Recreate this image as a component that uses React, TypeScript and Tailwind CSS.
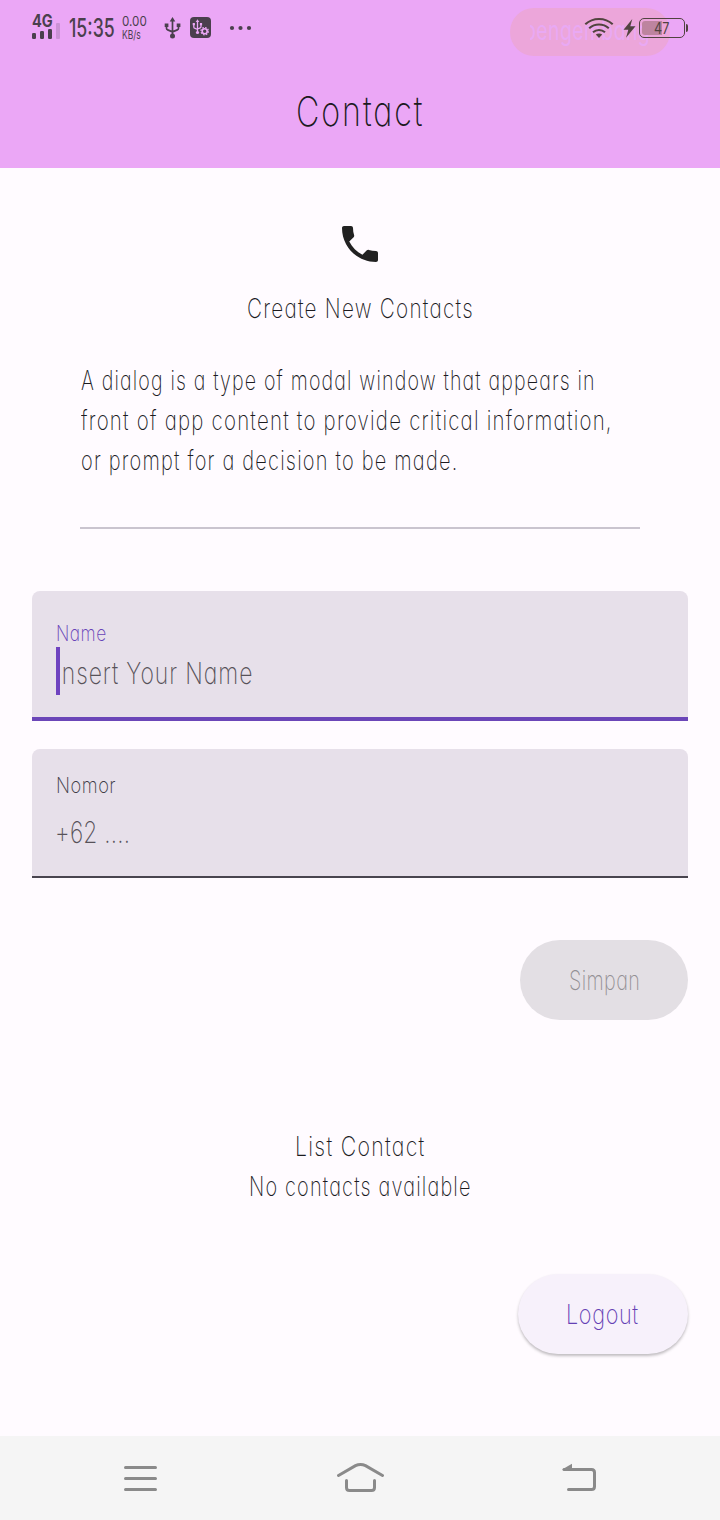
import { useLayoutEffect, useRef, useState } from "react";
import type { ReactNode } from "react";

/** One line of text set in a narrow face: squeezed horizontally to a given width. */
function Narrow({ width, className = "", children }: { width: number; className?: string; children: ReactNode }) {
  const ref = useRef<HTMLSpanElement>(null);
  const [scale, setScale] = useState(0.8);
  useLayoutEffect(() => {
    if (ref.current) setScale(width / ref.current.offsetWidth);
  }, [width]);
  return (
    <span className={`block whitespace-pre ${className}`} style={{ width }}>
      <span ref={ref} className="inline-block origin-left" style={{ transform: `scaleX(${scale})` }}>
        {children}
      </span>
    </span>
  );
}

function StatusBar() {
  return (
    <div className="relative flex h-14 items-start text-[#4a3f4d]">
      <div className="absolute left-[510px] top-2 h-12 w-40 overflow-hidden rounded-full bg-[#eca6da] pl-5">
        <div className="w-[126px] overflow-hidden">
          <Narrow width={126} className="-ml-[6px] text-[27px] font-normal leading-[46px] tracking-[0.02em] text-[#e9a9f4]">
            pengembang
          </Narrow>
        </div>
      </div>
      <div className="ml-8 mt-[14px] w-[29px]">
        <Narrow width={20.5} className="text-[17px] font-bold leading-[14px]">4G</Narrow>
        <svg className="block" width="29" height="11" viewBox="0 0 29 11" fill="currentColor">
          <rect x="0" y="5" width="4" height="6" rx="1.2" />
          <rect x="8" y="3" width="4" height="8" rx="1.2" />
          <rect x="16" y="1" width="4" height="10" rx="1.2" />
        </svg>
      </div>
      <div className="-ml-[5px] mt-[23px] h-4 w-1 rounded-[1px] bg-[#cb92d6]" />
      <Narrow width={46} className="ml-[9px] mt-[13px] text-[25px] font-medium leading-[30px]">15:35</Narrow>
      <div className="ml-[7px] mt-[15px]">
        <Narrow width={25} className="text-[13.5px] leading-[13px]">0.00</Narrow>
        <Narrow width={19} className="text-[12px] leading-[14px]">KB/s</Narrow>
      </div>
      <svg className="ml-[17px] mt-[17px]" width="18" height="22" viewBox="0 0 18 22" fill="none" stroke="currentColor" strokeWidth="1.7">
        <path d="M8.5 3v15M2.500 8v3.200q0 1.300 1.200 1.700l4.800 2M14.500 8v3.200q0 1.300-1.200 1.700l-4.800 2" />
        <path d="M8.500 0 5.700 4.500h5.600zM.700 6.500h3.700v3.500H.700zM12.700 6.500h3.700v3.500h-3.700z" fill="currentColor" stroke="none" />
        <circle cx="8.500" cy="19" r="2.500" fill="currentColor" stroke="none" />
      </svg>
      <svg className="ml-2 mt-[17px]" width="21" height="21" viewBox="0 0 21 21">
        <rect width="21" height="21" rx="4" fill="currentColor" />
        <g fill="none" stroke="#eba7f6" strokeWidth="1.300">
          <path d="M7.500 4v11M3.800 7v3q0 1 .8 1.200l2.900 1.300M11 7v2.500q0 1-.8 1.300l-2.700 1.200" />
          <circle cx="14.700" cy="14.200" r="2.500" strokeWidth="1.600" />
          <circle cx="14.700" cy="14.200" r="3.700" strokeWidth="1.200" strokeDasharray="1.600 1.300" />
        </g>
        <path d="M7.500 2.200 5.700 5h3.600zM2.700 6h2.200v2.300H2.700zM9.900 6h2.200v2.300H9.900z" fill="#eba7f6" />
        <circle cx="7.500" cy="15.500" r="1.600" fill="#eba7f6" />
      </svg>
      <svg className="ml-[18px] mt-[25px]" width="24" height="6" viewBox="0 0 24 6" fill="currentColor">
        <circle cx="3" cy="3" r="2.100" />
        <circle cx="11.500" cy="3" r="2.100" />
        <circle cx="20" cy="3" r="2.100" />
      </svg>
      <div className="relative ml-auto mr-8 mt-[17px] flex items-start text-[#51433f]">
        <svg className="-ml-px" width="30" height="22" viewBox="0 0 30 22" fill="none" stroke="currentColor" strokeWidth="2.100">
          <path d="M1.300 7.300C9 .200 21 .200 28.700 7.300" />
          <path d="M5.200 11.300c5.600-5 14-5 19.600 0" />
          <path d="M9 15.200c3.400-3 8.600-3 12 0" />
          <path d="M15 21l-3.200-3.500c1.800-1.500 4.600-1.500 6.400 0z" fill="currentColor" stroke="none" />
        </svg>
        <svg className="ml-[9px] mr-px mt-[2px]" width="13" height="19" viewBox="0 0 13 19" fill="currentColor">
          <path d="M9.300 0 .5 10.800h4.800L3 18.800 12.500 7.200H7.300z" />
        </svg>
        <div className="ml-[2px] mt-px flex h-5 w-[46px] rounded-[5px] border-[1.500px] border-[#51433f] p-[2px]">
          <div className="h-full w-5 rounded-l-[3px] bg-[#bd849f]" />
        </div>
        <Narrow width={15} className="absolute left-[69px] top-px text-[16px] leading-5">47</Narrow>
        <div className="ml-px mt-[7px] h-2 w-[2px] rounded-r-full bg-[#51433f]" />
      </div>
    </div>
  );
}

function NavigationBar() {
  return (
    <nav className="flex h-[84px] items-start bg-[#f5f5f5] text-[#8a8a8a]">
      <svg className="ml-[123px] mt-[29px]" width="35" height="27" viewBox="0 0 35 27" stroke="currentColor" strokeWidth="3" strokeLinecap="round">
        <path d="M2.500 2.500h30M2.500 13.500h30M2.500 24.500h30" />
      </svg>
      <svg className="ml-[178px] mt-[26px]" width="49" height="31" viewBox="0 0 49 31" fill="none" stroke="currentColor" strokeWidth="3" strokeLinecap="round">
        <path d="M2.500 13.500 19.500 3.700Q24.500 1.300 29.500 3.700L46.500 13.500" />
        <path d="M10.500 18.500v7q0 3 3 3h22q3 0 3-3v-7" />
      </svg>
      <svg className="ml-[177px] mt-[27px]" width="36" height="29" viewBox="0 0 36 29" fill="none" stroke="currentColor" strokeWidth="3" strokeLinecap="round">
        <path d="M2 6.500h27.500q3 0 3 3v14q0 3-3 3H6.500" />
        <path d="M0 6.500 10 .800v6.700z" fill="currentColor" stroke="none" />
      </svg>
    </nav>
  );
}

export default function App() {
  return (
    <div className="flex h-[1520px] w-[720px] flex-col overflow-hidden bg-[#fffbff] font-['Inter',sans-serif] text-[#1c1b1f] [font-feature-settings:'cv11']">
      <header className="h-[168px] bg-[#eba7f6]">
        <StatusBar />
        <h1 className="flex h-[110px] items-center justify-center text-[41px] font-[250] leading-none">
          <Narrow width={128} className="tracking-[0.060em]">Contact</Narrow>
        </h1>
      </header>

      <main className="flex h-[1268px] flex-col font-[250]">
        <section className="flex flex-col items-center pt-[52px]">
          <svg width="48" height="48" viewBox="0 0 24 24" fill="#212121">
            <path d="M6.620 10.790c1.440 2.830 3.760 5.140 6.590 6.590l2.200-2.200c.27-.27.670-.36 1.020-.24 1.120.37 2.330.57 3.570.57.550 0 1 .45 1 1V20c0 .55-.45 1-1 1-9.390 0-17-7.610-17-17 0-.55.450-1 1-1h3.500c.55 0 1 .45 1 1 0 1.250.2 2.450.57 3.570.11.35.03.740-.25 1.020l-2.200 2.200z" />
          </svg>
          <Narrow width={227} className="mt-5 text-[27px] leading-[41px] tracking-[0.060em]">Create New Contacts</Narrow>
          <div className="mt-8 w-[560px] pl-[0.500px] text-[27px] leading-10 tracking-[0.060em]">
            <Narrow width={515}>A dialog is a type of modal window that appears in</Narrow>
            <Narrow width={532}>front of app content to provide critical information,</Narrow>
            <Narrow width={377}>or prompt for a decision to be made.</Narrow>
          </div>
          <div className="mt-[46px] h-[2px] w-[560px] bg-[#cac4cf]" />
        </section>

        <form className="mx-8 mt-[62px] flex flex-col">
          <label className="relative flex h-[130px] flex-col rounded-t-lg border-b-4 border-[#6b46b8] bg-[#e7e0ea] pl-6 pt-7">
            <Narrow width={50.500} className="text-[22px] leading-7 tracking-[0.030em] text-[#6742b8]">Name</Narrow>
            <Narrow width={198} className="-ml-px text-[30px] leading-[52px] tracking-[0.040em] text-[#575259]">Insert Your Name</Narrow>
            <span className="absolute left-6 top-14 h-12 w-1 bg-[#6f43c0]" />
          </label>
          <label className="mt-7 flex h-[129px] flex-col rounded-t-lg border-b-2 border-[#49454f] bg-[#e7e0ea] pl-6 pt-[22px]">
            <Narrow width={60.500} className="text-[22px] leading-7 tracking-[0.030em] text-[#403c46]">Nomor</Narrow>
            <Narrow width={75} className="-ml-px mt-[7px] text-[30px] leading-[52px] tracking-[0.010em] text-[#575259]">+62 ....</Narrow>
          </label>
          <button type="button" className="mt-[62px] flex h-20 w-[168px] items-center justify-center self-end rounded-full bg-[#e3dfe4] pt-0.5 text-[27px] leading-10 text-[#939094]">
            <Narrow width={71} className="text-left tracking-[0.020em]">Simpan</Narrow>
          </button>
        </form>

        <section className="mt-[107px] flex flex-col items-center text-[27px] leading-10 tracking-[0.060em]">
          <Narrow width={131}>List Contact</Narrow>
          <Narrow width={223}>No contacts available</Narrow>
        </section>
        <button type="button" className="mr-8 mt-[67px] flex h-20 w-[170px] items-center justify-center self-end rounded-full bg-[#f7f1fb] pr-0.5 pt-0.5 text-[27px] leading-10 text-[#6440b4] shadow-[0_2px_3px_rgba(0,0,0,0.25)]">
          <Narrow width={73} className="text-left tracking-[0.030em]">Logout</Narrow>
        </button>
      </main>

      <NavigationBar />
    </div>
  );
}
